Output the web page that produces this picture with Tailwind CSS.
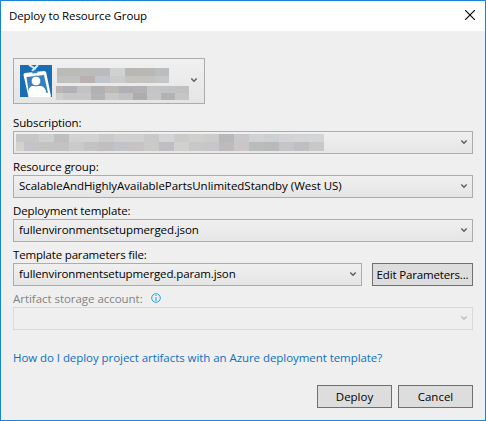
<!DOCTYPE html>
<html lang="en">
<head>
<meta charset="utf-8">
<title>Deploy to Resource Group</title>
<script src="https://cdn.jsdelivr.net/npm/@tailwindcss/browser@4"></script>
</head>
<body class="w-[486px] h-[421px] overflow-hidden">
<main class="w-[486px] h-[421px] flex flex-col border border-[#1883d7] bg-[#efefef] font-['Open_Sans','Noto_Sans',sans-serif] text-[11.5px] leading-[18px] text-black whitespace-nowrap">
  <header class="h-[30px] shrink-0 bg-white flex justify-between pl-2 pr-[10px]">
    <h1 class="pt-[6px] tracking-[-0.13px]">Deploy to Resource Group</h1>
    <button aria-label="Close" class="self-start pt-[9px]"><svg class="block" width="10" height="10" viewBox="0 0 10 10" fill="none" stroke="#000" stroke-width="1.1"><path d="M0 0 10 10M10 0 0 10"/></svg></button>
  </header>

  <div class="flex flex-col pl-3 pr-3 pt-[27px]">
    <button class="w-[192px] h-[46px] border border-[#acacac] bg-linear-to-b from-[#f0f0f0] to-[#e5e5e5] flex items-start pl-[6px] pt-[6px] text-left">
      <svg class="block shrink-0" width="32" height="32" viewBox="0 0 32 32">
        <rect width="32" height="32" fill="#1a6db3"/>
        <path d="M9 0 16 4M18 0 12 6" stroke="#d9edf9" stroke-width="2" fill="none"/>
        <path d="M3.500 10Q3.300 8.300 5 8L24 6Q25.800 5.800 26.200 7.500L31 31 30.500 32H8.500Z" fill="#fff"/>
        <path d="M6.500 12 24 10 28 28 26 27.500Q25.500 22.500 21.500 21H11.500Q8.500 23 8.700 27Z" fill="#3481c0"/>
        <path d="M12 6 17 5.500 17.500 8 12.500 8.600Z" fill="#3481c0"/>
        <path d="M8.700 32V27Q9 21.500 13 21.300H20Q25 21.500 26 27.500V32Z" fill="#fff"/>
        <circle cx="16" cy="16" r="4.900" fill="#fff" stroke="#2474b8" stroke-width=".9"/>
      </svg>
      <svg class="block shrink-0 ml-1 mt-[3px]" width="134" height="32" viewBox="56 68 134 32" shape-rendering="crispEdges">
        <path fill="#babbb7" d="M57 68h23v8H57z"/><path fill="#bbbbb9" d="M80 68h15v8H80z"/><path fill="#b9bbbd" d="M95 68h15v8H95z"/><path fill="#d0d2d1" d="M110 68h15v8h-15z"/><path fill="#b9b7b4" d="M125 68h15v8h-15z"/><path fill="#bab8b5" d="M140 68h15v8h-15z"/><path fill="#bbbdbf" d="M155 68h14v8h-14z"/>
        <path fill="#c0c1be" d="M57 76h23v7H57z"/><path fill="#b7b1af" d="M80 76h15v7H80z"/><path fill="#c0c4cb" d="M95 76h15v7H95z"/><path fill="#cacbcc" d="M110 76h15v7h-15z"/><path fill="#c4c3c0" d="M125 76h30v7h-30z"/><path fill="#c5c6c8" d="M155 76h14v7h-14z"/>
        <path fill="#bab5b4" d="M56 86h7v7h-7z"/><path fill="#b2b2b6" d="M63 86h14v7H63z"/><path fill="#c3c2c2" d="M77 86h14v7H77z"/><path fill="#b1b1b4" d="M91 86h14v7H91z"/><path fill="#bcb8b5" d="M105 86h14v7h-14z"/><path fill="#b0b0b4" d="M119 86h14v7h-14z"/><path fill="#b4b1b4" d="M133 86h14v7h-14z"/><path fill="#c4c4c4" d="M147 86h14v7h-14z"/><path fill="#c1c2c3" d="M161 86h14v7h-14z"/><path fill="#c1c1c1" d="M175 86h14v7h-14z"/>
        <path fill="#cecece" d="M56 93h7v7h-7z"/><path fill="#c8c7c8" d="M63 93h28v7H63z"/><path fill="#b4b4b5" d="M91 93h14v7H91z"/><path fill="#c9c8c8" d="M105 93h14v7h-14z"/><path fill="#c1c1c3" d="M119 93h14v7h-14z"/><path fill="#aeacae" d="M133 93h14v7h-14z"/><path fill="#c6c6c6" d="M147 93h14v7h-14z"/><path fill="#b3b3b3" d="M161 93h14v7h-14z"/><path fill="#c5c5c7" d="M175 93h14v7h-14z"/>
      </svg>
      <svg class="block shrink-0 mt-[12px]" width="8" height="6" viewBox="0 0 8 6" fill="none" stroke="#606060" stroke-width="1.500"><path d="M1.300 1.500 4 4.200 6.700 1.500"/></svg>
    </button>

    <label class="h-[27px] pt-[10px] tracking-[-0.12px]">Subscription:</label>
    <div class="h-[23px] border border-[#acacac] bg-linear-to-b from-[#f0f0f0] to-[#e5e5e5] flex justify-between pl-[2px] pr-1">
      <svg class="block mt-[2px]" width="308" height="17" viewBox="16 0 308 17" shape-rendering="crispEdges">
        <path fill="#c8c7c8" d="M16 0h23v8H16z"/><path fill="#cfcfcf" d="M39 0h15v8H39z"/><path fill="#c0bfc0" d="M54 0h15v8H54z"/><path fill="#d3d2d3" d="M69 0h30v8H69z"/><path fill="#cccbcc" d="M99 0h15v8H99z"/><path fill="#d0d0d1" d="M114 0h30v8h-30z"/><path fill="#cac9ca" d="M144 0h15v8h-15z"/><path fill="#d3d4d5" d="M159 0h15v8h-15z"/><path fill="#cbcbc8" d="M174 0h15v8h-15z"/><path fill="#cfcfcc" d="M189 0h15v8h-15z"/><path fill="#cccccd" d="M204 0h15v8h-15z"/><path fill="#b8b7ba" d="M219 0h15v8h-15z"/><path fill="#c9c7ca" d="M234 0h15v8h-15z"/><path fill="#d0d3d4" d="M249 0h15v8h-15z"/><path fill="#cdd0d2" d="M264 0h15v8h-15z"/><path fill="#d3d3d5" d="M279 0h15v8h-15z"/><path fill="#d4d5d6" d="M294 0h30v8h-30z"/>
        <path fill="#d5d1d0" d="M16 8h8v9h-8z"/><path fill="#c4c4c8" d="M24 8h15v9H24z"/><path fill="#c3c3c1" d="M39 8h15v9H39z"/><path fill="#c2c2c3" d="M54 8h15v9H54z"/><path fill="#cacacd" d="M69 8h15v9H69z"/><path fill="#c4c2c2" d="M84 8h15v9H84z"/><path fill="#c0bfbe" d="M99 8h15v9H99z"/><path fill="#c0c3ca" d="M114 8h15v9h-15z"/><path fill="#c8c3c3" d="M129 8h15v9h-15z"/><path fill="#cacac9" d="M144 8h15v9h-15z"/><path fill="#bfbdc2" d="M159 8h15v9h-15z"/><path fill="#d0d0ce" d="M174 8h15v9h-15z"/><path fill="#c8c8c9" d="M189 8h15v9h-15z"/><path fill="#c7c5ca" d="M204 8h15v9h-15z"/><path fill="#bcbabc" d="M219 8h15v9h-15z"/><path fill="#cac6c7" d="M234 8h15v9h-15z"/><path fill="#babbbc" d="M249 8h15v9h-15z"/><path fill="#b8b9b9" d="M264 8h15v9h-15z"/><path fill="#c5c4c9" d="M279 8h15v9h-15z"/><path fill="#bfbec0" d="M294 8h15v9h-15z"/><path fill="#c8c8c9" d="M309 8h15v9h-15z"/>
      </svg>
      <svg class="block mt-[7px]" width="8" height="6" viewBox="0 0 8 6" fill="none" stroke="#606060" stroke-width="1.500"><path d="M1.300 1.500 4 4.200 6.700 1.500"/></svg>
    </div>

    <label class="h-[21px] pt-[4px] tracking-[-0.14px]">Resource group:</label>
    <div class="h-[23px] border border-[#acacac] bg-linear-to-b from-[#f0f0f0] to-[#e5e5e5] flex justify-between pl-[5px] pr-1">
      <span class="pt-px tracking-[-0.03px]">ScalableAndHighlyAvailablePartsUnlimitedStandby (West US)</span>
      <svg class="block mt-[7px]" width="8" height="6" viewBox="0 0 8 6" fill="none" stroke="#606060" stroke-width="1.500"><path d="M1.300 1.500 4 4.200 6.700 1.500"/></svg>
    </div>

    <label class="h-[21px] pt-[4px] tracking-[-0.12px]">Deployment template:</label>
    <div class="h-[23px] border border-[#acacac] bg-linear-to-b from-[#f0f0f0] to-[#e5e5e5] flex justify-between pl-[5px] pr-1">
      <span class="pt-px tracking-[-0.1px]">fullenvironmentsetupmerged.json</span>
      <svg class="block mt-[7px]" width="8" height="6" viewBox="0 0 8 6" fill="none" stroke="#606060" stroke-width="1.500"><path d="M1.300 1.500 4 4.200 6.700 1.500"/></svg>
    </div>

    <label class="h-[21px] pt-[4px] tracking-[-0.17px]">Template parameters file:</label>
    <div class="flex gap-[10px]">
      <div class="w-[349px] h-[23px] border border-[#acacac] bg-linear-to-b from-[#f0f0f0] to-[#e5e5e5] flex justify-between pl-[5px] pr-1">
        <span class="pt-px tracking-[-0.12px]">fullenvironmentsetupmerged.param.json</span>
        <svg class="block mt-[7px]" width="8" height="6" viewBox="0 0 8 6" fill="none" stroke="#606060" stroke-width="1.500"><path d="M1.300 1.500 4 4.200 6.700 1.500"/></svg>
      </div>
      <button class="w-[101px] h-[23px] border border-[#707070] bg-[#dddddd] flex justify-center tracking-[-0.16px] pt-[2px]">Edit Parameters...</button>
    </div>

    <div class="h-[21px] flex text-[#838383]">
      <label class="pt-[4px] w-[138px] tracking-[-0.04px]">Artifact storage account:</label>
      <svg class="block mt-[7px]" width="10" height="10" viewBox="0 0 10 10"><circle cx="5" cy="5" r="4.300" fill="none" stroke="#1ba1e2"/><path d="M4.500 2h1v1h-1zM4.500 4h1v4h-1z" fill="#1ba1e2"/></svg>
    </div>
    <div class="h-[23px] border border-[#d9d9d9] flex justify-end pr-1">
      <svg class="block mt-[7px]" width="8" height="6" viewBox="0 0 8 6" fill="none" stroke="#bfbfbf" stroke-width="1.500"><path d="M1.300 1.500 4 4.200 6.700 1.500"/></svg>
    </div>

    <a class="mt-[19px] h-[18px] text-[#0e70c0] tracking-[-0.06px]">How do I deploy project artifacts with an Azure deployment template?</a>
    <div class="mt-[18px] flex justify-end gap-[6px]">
      <button class="w-[75px] h-[23px] border border-[#707070] bg-[#dddddd] flex justify-center pt-[2px]">Deploy</button>
      <button class="w-[75px] h-[23px] border border-[#707070] bg-[#dddddd] flex justify-center pt-[2px]">Cancel</button>
    </div>
  </div>
</main>
</body>
</html>
